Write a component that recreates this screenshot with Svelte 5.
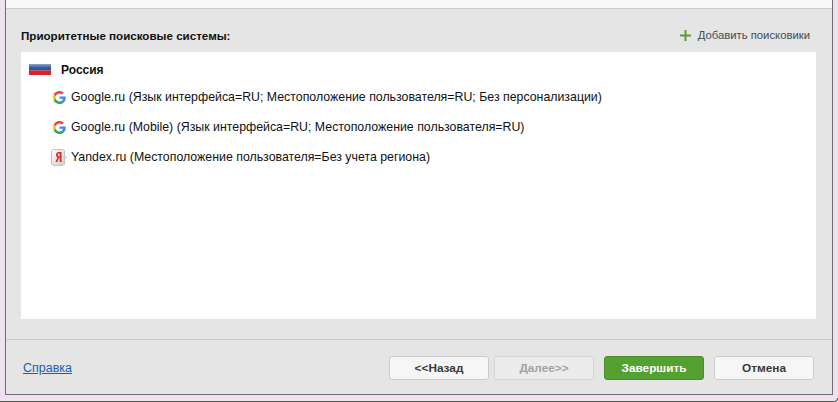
<script>
    let engines = [
        { icon: "google", text: "Google.ru (Язык интерфейса=RU; Местоположение пользователя=RU; Без персонализации)" },
        { icon: "google", text: "Google.ru (Mobile) (Язык интерфейса=RU; Местоположение пользователя=RU)" },
        { icon: "yandex", text: "Yandex.ru (Местоположение пользователя=Без учета региона)" }
    ];
</script>

<div class="page">
    <div class="dialog">
        <div class="topstrip"></div>
        <div class="content">
            <div class="head">
                <span class="title">Приоритетные поисковые системы:</span>
                <span class="add">
                    <svg width="11" height="11" viewBox="0 0 11 11"><path d="M4.500 0h2v4.500H11v2H6.500V11h-2V6.500H0v-2h4.500z" fill="#5f9c32"/></svg>
                    Добавить поисковики
                </span>
            </div>
            <div class="panel">
                <div class="country">
                    <svg class="flag" width="22" height="11" viewBox="0 0 22 11">
                        <defs>
                            <linearGradient id="blue" x1="0" y1="0" x2="0" y2="1">
                                <stop offset="0" stop-color="#8fa6c8"/>
                                <stop offset="0.5" stop-color="#3a63a8"/>
                                <stop offset="1" stop-color="#1d4a94"/>
                            </linearGradient>
                        </defs>
                        <rect width="22" height="6.500" fill="url(#blue)"/>
                        <rect y="6.500" width="22" height="4.500" fill="#e01f26"/>
                    </svg>
                    <b>Россия</b>
                </div>
                {#each engines as engine}
                    <div class="engine">
                        <span class="icon">
                            {#if engine.icon === "google"}
                                <svg class="g" width="13" height="13" viewBox="0 0 48 48">
                                    <path fill="#ea4335" d="M24 9.500c3.900 0 6.900 1.600 9.100 3.600l6.800-6.700C35.800 2.600 30.400 0 24 0 14.600 0 6.600 5.400 2.600 13.200l7.900 6.100C12.400 13.600 17.700 9.500 24 9.500z"/>
                                    <path fill="#4285f4" d="M47 24.500c0-1.600-.1-3.100-.4-4.500H24v9h12.900c-.6 3-2.200 5.400-4.700 7.100l7.600 5.900C44.300 37.900 47 31.800 47 24.500z"/>
                                    <path fill="#fbbc05" d="M10.500 28.700C10 27.200 9.700 25.600 9.700 24s.3-3.200.8-4.700l-7.900-6.100C1 16.400 0 20.100 0 24s1 7.600 2.600 10.800l7.900-6.100z"/>
                                    <path fill="#34a853" d="M24 48c6.500 0 11.900-2.100 15.800-5.900l-7.600-5.900c-2.100 1.400-4.900 2.300-8.200 2.300-6.300 0-11.600-4.100-13.500-9.800l-7.900 6.100C6.600 42.600 14.600 48 24 48z"/>
                                </svg>
                            {:else}
                                <svg width="16" height="17" viewBox="0 0 16 17">
                                    <defs>
                                        <linearGradient id="tag" x1="0" y1="0" x2="1" y2="1">
                                            <stop offset="0" stop-color="#ffffff"/>
                                            <stop offset="1" stop-color="#c9c9c9"/>
                                        </linearGradient>
                                    </defs>
                                    <path d="M2 .500h10l1.500 1.500v5.500l2 1-2 1V15l-1.500 1.500H2L.500 15V2z" fill="url(#tag)" stroke="#c2c2c2"/>
                                    <path d="M10.500 3H8C6.200 3 5 4.200 5 5.900c0 1.200.6 2 1.500 2.400L4.500 13h1.800l1.800-4.500h.6V13h1.800zM8.700 7.200H8.100c-1 0-1.400-.5-1.400-1.300s.5-1.400 1.400-1.400h.6z" fill="#e0261e"/>
                                </svg>
                            {/if}
                        </span>
                        {engine.text}
                    </div>
                {/each}
            </div>
        </div>
        <div class="footer">
            <a href="#help">Справка</a>
            <div class="buttons">
                <button>&lt;&lt;Назад</button>
                <button disabled>Далее&gt;&gt;</button>
                <button class="primary">Завершить</button>
                <button>Отмена</button>
            </div>
        </div>
    </div>
    <div class="edge"></div>
</div>

<style>
    :global(body) {
        margin: 0;
    }

    .page {
        width: 838px;
        height: 402px;
        box-sizing: border-box;
        background-color: #f0e1f1;
        padding: 0 5px;
        font-family: "Liberation Sans", Arial, sans-serif;
        font-size: 12px;
        color: #1c1c1c;
        overflow: hidden;
    }

    .dialog {
        height: 395px;
        box-sizing: border-box;
        background-color: #e5e5e5;
        border: solid #6e6e6e 1px;
        border-top: none;
        display: flex;
        flex-direction: column;
    }

    /* bottom edge of the outer window, curls up at the corner */
    .edge {
        height: 4px;
        box-sizing: border-box;
        margin: 3px -5px 0 -5px;
        border-bottom: solid #555 1px;
        border-right: solid #555 1px;
        border-bottom-right-radius: 4px;
    }

    .topstrip {
        height: 9px;
        background-color: #f8f8f8;
        border-bottom: solid #cbcbcb 1px;
        box-sizing: border-box;
        flex: none;
    }

    .content {
        padding: 0 16px 0 15px;
        height: 331px;
        box-sizing: border-box;
        border-bottom: solid #cacaca 1px;
        flex: none;
    }

    .head {
        height: 43px;
        padding-top: 9px;
        box-sizing: border-box;
        display: flex;
        justify-content: space-between;
        align-items: center;
    }

    .title {
        font-weight: bold;
        font-size: 11.6px;
        color: #111;
    }

    .add {
        display: flex;
        align-items: center;
        gap: 7px;
        font-size: 11.3px;
        color: #444c57;
        margin-right: 6px;
    }

    .panel {
        background-color: #ffffff;
        height: 267px;
        padding-top: 4px;
        box-sizing: border-box;
    }

    .country {
        display: flex;
        align-items: center;
        height: 27px;
        margin-bottom: -1px;
        padding-left: 8px;
        color: #111;
    }

    .flag {
        margin-right: 10px;
    }

    .engine {
        display: flex;
        align-items: center;
        height: 30px;
        padding-left: 30px;
        font-size: 12.35px;
        color: #111;
    }

    .icon {
        width: 20px;
        height: 17px;
        flex: none;
        display: flex;
        align-items: center;
        box-sizing: border-box;
    }

    .g {
        margin-left: 2px;
    }

    .footer {
        flex: 1;
        display: flex;
        justify-content: space-between;
        align-items: center;
        padding: 1px 18px 0 17px;
    }

    a {
        color: #1a5fb4;
        font-size: 12.5px;
    }

    .buttons {
        display: flex;
        gap: 5px;
    }

    button {
        width: 100px;
        height: 24px;
        padding: 0;
        background-color: #f6f6f6;
        border: solid #cccccc 1px;
        border-radius: 3px;
        font-family: inherit;
        font-size: 11.8px;
        font-weight: bold;
        color: #3a3a3a;
    }

    button:disabled {
        background-color: #ececec;
        border-color: #d4d4d4;
        color: #a2a2a2;
    }

    button.primary {
        margin: 0 5px;
        background-color: #54a030;
        border-color: #4a8f2a;
        color: #ffffff;
    }
</style>
